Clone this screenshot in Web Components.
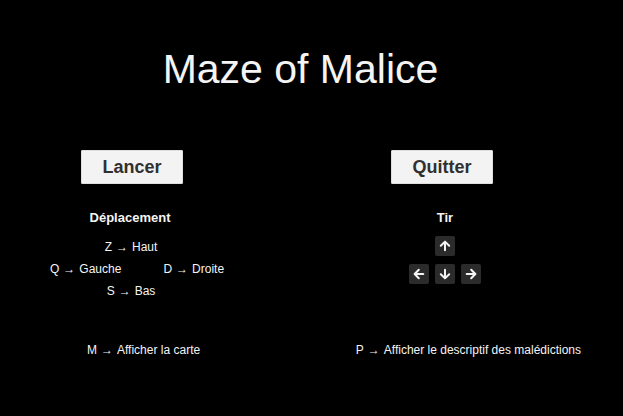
<!DOCTYPE html>
<html lang="fr">
<head>
<meta charset="utf-8">
<meta name="viewport" content="width=device-width, initial-scale=1">
<title>Maze of Malice</title>
<style>
html { background: #000; }
body { margin: 0; background: #000; color: #f4f4f4; font: 12px/22px "Liberation Sans", Arial, sans-serif; }
</style>
</head>
<body>
<maze-menu></maze-menu>

<template id="menu-tpl">
<style>
:host { display: block; min-height: 100vh; box-sizing: border-box; padding-top: 45px; }
h1 { margin: 0; padding-right: 22px; text-align: center; font-size: 41px; line-height: 48px; font-weight: 400; }
nav, section, footer { display: flex; justify-content: space-between; white-space: nowrap; }
nav { padding: 57px 130px 0 81px; }
section { padding: 23px 142px 0 50px; }
footer { padding: 37px 42px 0 87px; }
</style>
<h1>Maze of Malice</h1>
<nav><menu-button>Lancer</menu-button><menu-button>Quitter</menu-button></nav>
<section><move-keys></move-keys><fire-keys></fire-keys></section>
<footer><key-hint key="M">Afficher la carte</key-hint><key-hint key="P">Afficher le descriptif des malédictions</key-hint></footer>
</template>

<template id="button-tpl">
<style>
:host { display: block; }
button { display: block; min-width: 102px; height: 34px; margin: 0; padding: 0 20px; border: 1px solid #dedede; border-radius: 1px; background: #f3f3f3; color: #303030; font: bold 18px/32px "Liberation Sans", Arial, sans-serif; cursor: pointer; }
</style>
<button type="button"><slot></slot></button>
</template>

<template id="hint-tpl">
<style>
:host { display: flex; gap: 4px; }
kbd { font: inherit; }
</style>
<kbd></kbd><span>→</span><span><slot></slot></span>
</template>

<template id="move-tpl">
<style>
:host { display: block; }
h2 { margin: 0 0 7px; padding-right: 14px; text-align: center; font-size: 13px; line-height: 22px; }
div { display: grid; grid-template-columns: auto auto; column-gap: 42px; }
.mid { grid-column: 1 / -1; justify-self: center; padding-right: 12px; }
</style>
<h2>Déplacement</h2>
<div>
<key-hint class="mid" key="Z">Haut</key-hint>
<key-hint key="Q">Gauche</key-hint>
<key-hint key="D">Droite</key-hint>
<key-hint class="mid" key="S">Bas</key-hint>
</div>
</template>

<template id="fire-tpl">
<style>
:host { display: block; }
h2 { margin: 0 0 7px; text-align: center; font-size: 13px; line-height: 22px; }
div { display: grid; grid-template-columns: repeat(3, 20px); gap: 8px 6px; }
.up { grid-column: 2; }
.left { grid-column: 1; }
</style>
<h2>Tir</h2>
<div>
<arrow-key class="up" turn="0" label="Haut"></arrow-key>
<arrow-key class="left" turn="270" label="Gauche"></arrow-key>
<arrow-key turn="180" label="Bas"></arrow-key>
<arrow-key turn="90" label="Droite"></arrow-key>
</div>
</template>

<template id="arrow-tpl">
<style>
:host { display: block; height: 20px; border-radius: 2px; background: #2b2b2b; }
svg { display: block; width: 20px; height: 20px; }
</style>
<svg viewBox="0 0 20 20" role="img" fill="none" stroke="#f4f4f4" stroke-width="2" stroke-linecap="round" stroke-linejoin="round"><path d="M10 14.3V5.8M5.8 9.8L10 5.6L14.2 9.8"/></svg>
</template>

<script>
const define = (name, template, setup) => customElements.define(name, class extends HTMLElement {
  connectedCallback() {
    if (this.shadowRoot) return;
    const root = this.attachShadow({ mode: "open" });
    root.append(document.getElementById(template).content.cloneNode(true));
    if (setup) setup(this, root);
  }
});
define("menu-button", "button-tpl");
define("key-hint", "hint-tpl", (host, root) => {
  root.querySelector("kbd").textContent = host.getAttribute("key");
});
define("arrow-key", "arrow-tpl", (host, root) => {
  root.querySelector("svg").setAttribute("aria-label", host.getAttribute("label"));
  root.querySelector("path").setAttribute("transform", `rotate(${host.getAttribute("turn")} 10 10)`);
});
define("move-keys", "move-tpl");
define("fire-keys", "fire-tpl");
define("maze-menu", "menu-tpl");
</script>
</body>
</html>
